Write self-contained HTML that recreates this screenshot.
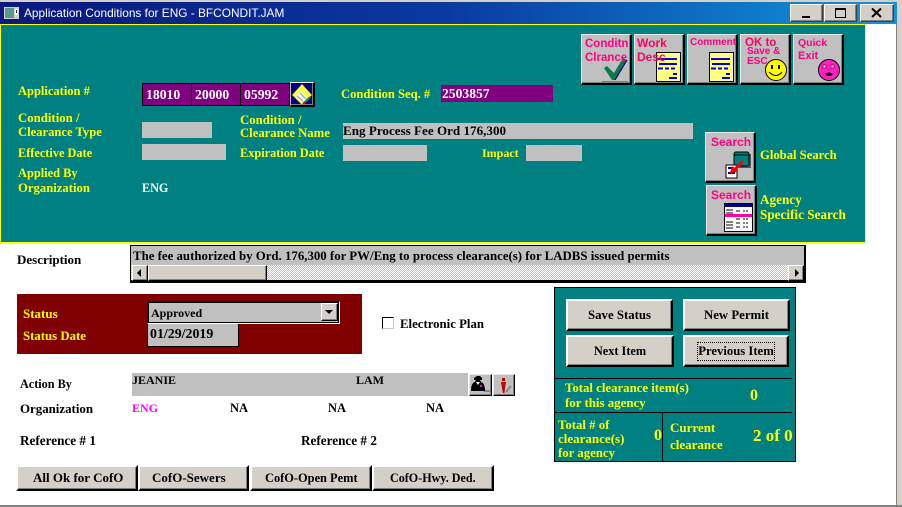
<!DOCTYPE html>
<html><head><meta charset="utf-8"><style>
html,body{margin:0;padding:0;background:#fff}
#w{position:relative;width:902px;height:507px;overflow:hidden;background:#fff;font:bold 12.8px "Liberation Serif",serif}
#w div,#w svg{position:absolute;box-sizing:border-box}
.t{white-space:nowrap;line-height:14px;color:#000}
.y{color:#ff0;font-size:12.6px}
.g{background:#c0c0c0}
.p{background:#800080;border:1px solid #000;color:#fff;font-size:13.7px;line-height:21px;padding-left:3px}
.b{background:#d4d0c8;border:2px solid;border-color:#fff #000 #000 #fff;box-shadow:inset -1px -1px 0 #808080;text-align:center;color:#000;line-height:26px;white-space:nowrap}
.l{text-align:left;line-height:22px;height:26px;top:465px}
.i{background:#c0c0c0;border:1px solid;border-width:1px 2px 2px 1px;border-color:#e8e8e8 #000 #000 #e8e8e8;box-shadow:inset -1px -1px 0 #808080}
.m{color:#ff0080;font:bold 12px "Liberation Sans",sans-serif;white-space:nowrap;line-height:14px}
.s{border-width:1px;border-color:#fff #404040 #404040 #fff}
</style></head><body><div id="w">
<div style="left:0;top:0;width:902px;height:24px;background:#d4d0c8"></div>
<div style="left:0;top:2px;width:897px;height:22px;background:linear-gradient(90deg,#0a1a80 0,#0a1a80 5%,#0a3aa0 50%,#1084d0 90%,#1a90d8 100%)"></div>
<div style="left:896px;top:24px;width:6px;height:483px;background:#d4d0c8;border-left:1px solid #808080"></div>
<div style="left:0;top:505px;width:902px;height:2px;background:#808080"></div>
<svg style="left:4px;top:7px" width="15" height="12"><rect width="15" height="12" fill="#d4d0c8"/><rect x="1" y="1" width="9" height="10" fill="#5a9a90"/><rect x="11" y="2" width="3" height="6" fill="#fff"/><rect x="12" y="3" width="1" height="3" fill="#0a246a"/></svg>
<div class="t" style="left:24px;top:6px;color:#fff;font:11.86px/14px 'Liberation Sans',sans-serif">Application Conditions for ENG - BFCONDIT.JAM</div>
<div class="b s" style="left:790px;top:4px;width:33px;height:18px"></div>
<div style="left:802px;top:16px;width:8px;height:2px;background:#000"></div>
<div class="b s" style="left:824px;top:4px;width:33px;height:18px"></div>
<div style="left:835px;top:8px;width:11px;height:10px;border:1px solid #000;border-top-width:2px"></div>
<div class="b s" style="left:860px;top:4px;width:34px;height:18px"></div>
<svg style="left:871px;top:8px" width="12" height="10"><path d="M1 0.5L10 9M10 0.5L1 9" stroke="#000" stroke-width="2"/></svg>

<div style="left:0;top:24px;width:866px;height:220px;background:#008080;border:1px solid #ff0;border-width:1px 1px 2px 1px"></div>

<div class="t y" style="left:18px;top:84px;font-size:12.5px">Application #</div>
<div class="p" style="left:142px;top:83px;width:50px;height:23px">18010</div>
<div class="p" style="left:191px;top:83px;width:50px;height:23px">20000</div>
<div class="p" style="left:240px;top:83px;width:50px;height:23px">05992</div>
<div class="i" style="left:290px;top:82px;width:25px;height:25px;background:#000080;border-color:#fff #000 #000 #c0c0c0"></div>
<svg style="left:292px;top:84px" width="21" height="22"><path d="M0 11L10 0L20 11L10 21Z" fill="#ffff40" stroke="#555" stroke-width=".5"/><path d="M3 12L9 7L16 14L11 20Z" fill="#f4f4f4"/><path d="M5 12L11 17M8 9L14 15" stroke="#999"/><path d="M11 20L13 18" stroke="#f00" stroke-width="2"/><path d="M13 18L18 13" stroke="#0a0" stroke-width="2"/></svg>
<div class="t y" style="left:341px;top:87px;font-size:12.6px">Condition Seq. #</div>
<div style="left:441px;top:85px;width:112px;height:17px;background:#800080;color:#fff;padding-left:1px;line-height:17px;font-size:13.6px">2503857</div>

<div class="t y" style="left:18px;top:111px;font-size:12.8px">Condition /</div>
<div class="t y" style="left:18px;top:125px">Clearance Type</div>
<div class="g" style="left:142px;top:122px;width:70px;height:16px"></div>
<div class="t y" style="left:240px;top:113px;font-size:12.8px">Condition /</div>
<div class="t y" style="left:240px;top:126px;font-size:12.7px">Clearance Name</div>
<div class="g t" style="left:343px;top:123px;width:350px;height:16px;line-height:15px;font-size:13.1px">Eng Process Fee Ord 176,300</div>
<div class="t y" style="left:18px;top:146px;font-size:12.3px">Effective Date</div>
<div class="g" style="left:142px;top:144px;width:84px;height:16px"></div>
<div class="t y" style="left:240px;top:146px;font-size:12.3px">Expiration Date</div>
<div class="g" style="left:343px;top:145px;width:84px;height:16px"></div>
<div class="t y" style="left:482px;top:146px;font-size:12px">Impact</div>
<div class="g" style="left:526px;top:145px;width:56px;height:16px"></div>
<div class="t y" style="left:18px;top:166px;font-size:12.4px">Applied By</div>
<div class="t y" style="left:18px;top:181px;font-size:12.7px">Organization</div>
<div class="t" style="left:142px;top:181px;color:#fff;font-size:12.2px">ENG</div>

<div class="i" style="left:581px;top:34px;width:51px;height:51px"></div>
<svg style="left:602px;top:58px" width="28" height="25"><path d="M0 23.5H26" stroke="#808080" stroke-width="1"/><path d="M2 10L5 8L12 15L21 0L25 2L13 22H10Z" fill="#0a7a4a"/><path d="M25 2L13 22" stroke="#000080" stroke-width="1.2"/></svg>
<div class="m" style="left:585px;top:37px;font-size:11.5px">Conditn</div>
<div class="m" style="left:585px;top:51px;font-size:11.5px">Clrance</div>

<div class="i" style="left:634px;top:34px;width:51px;height:51px"></div>
<svg style="left:656px;top:52px" width="26" height="30"><rect x=".5" y=".5" width="24" height="29" fill="#ffff80" stroke="#000"/><path d="M2 7H21M3 12H21M2 16.5H7M9 16.5H13M15 16.5H19M17 22H21M13 26H21" stroke="#0000e0" stroke-width="2"/></svg>
<div class="m" style="left:637px;top:36px;color:#ff0060">Work</div>
<div class="m" style="left:637px;top:50px;color:#ff0060">Desc</div>

<div class="i" style="left:687px;top:34px;width:51px;height:51px"></div>
<svg style="left:709px;top:52px" width="26" height="30"><rect x=".5" y=".5" width="24" height="29" fill="#ffff80" stroke="#000"/><path d="M2 7H21M3 12H21M2 16.5H7M9 16.5H13M15 16.5H19M17 22H21M13 26H21" stroke="#0000e0" stroke-width="2"/></svg>
<div class="m" style="left:690px;top:36px;font-size:10px">Comment</div>

<div class="i" style="left:740px;top:34px;width:51px;height:51px"></div>
<svg style="left:764px;top:58px" width="24" height="24"><circle cx="12" cy="12" r="10.5" fill="#ffff00" stroke="#000"/><rect x="7" y="7" width="2" height="4"/><rect x="14" y="7" width="2" height="4"/><path d="M5 14Q12 21 18 14" fill="none" stroke="#000"/></svg>
<div class="m" style="left:745px;top:36px;color:#ff0060;font-size:11.5px">OK to</div>
<div class="m" style="left:747px;top:45px;font-size:10px">Save &amp;</div>
<div class="m" style="left:747px;top:55px;font-size:10px">ESC</div>

<div class="i" style="left:793px;top:34px;width:51px;height:51px"></div>
<svg style="left:817px;top:58px" width="24" height="24"><circle cx="12" cy="12" r="10.5" fill="#ff20c0" stroke="#000"/><rect x="6" y="7" width="3" height="3" fill="#ffc0e0" stroke="#000" stroke-width=".5"/><rect x="14" y="7" width="3" height="3" fill="#ffc0e0" stroke="#000" stroke-width=".5"/><path d="M8 16Q12 20 16 16Q12 13 8 16Z" fill="#000"/></svg>
<div class="m" style="left:798px;top:36px;font-size:10.5px">Quick</div>
<div class="m" style="left:798px;top:49px;font-size:11px">Exit</div>

<div class="i" style="left:705px;top:132px;width:51px;height:51px"></div>
<svg style="left:725px;top:151px" width="28" height="28"><rect x="11" y="3" width="15" height="14" fill="#555"/><rect x="9" y="1" width="15" height="14" rx="2" fill="#008080" stroke="#000"/><path d="M9 4H24" stroke="#000"/><rect x="1" y="14" width="11" height="13" fill="#fff" stroke="#000"/><path d="M3 17H9M3 22H10" stroke="#0000a0" stroke-width="2"/><path d="M5 22L7 15L9 17L17 9L19 11L11 19L13 21Z" fill="#f00"/></svg>
<div class="m" style="left:711px;top:135px">Search</div>
<div class="t y" style="left:760px;top:148px;font-size:12.65px">Global Search</div>

<div class="i" style="left:706px;top:185px;width:51px;height:51px"></div>
<svg style="left:724px;top:203px" width="30" height="30"><rect x=".5" y=".5" width="28" height="28" fill="#fff" stroke="#000"/><rect x="1" y="1" width="27" height="3" fill="#000080"/><path d="M2 7H9M2 10H9M2 13H9M2 19H9M2 22H9M2 25H9" stroke="#000"/><path d="M13 7V26M15 7V26M20 7V26M23 7V26" stroke="#000" stroke-dasharray="2 2"/><rect x="1" y="11" width="27" height="3" fill="#ff00a0"/></svg>
<div class="m" style="left:711px;top:188px">Search</div>
<div class="t y" style="left:760px;top:193px;font-size:13.2px">Agency</div>
<div class="t y" style="left:760px;top:208px;font-size:13.2px">Specific Search</div>

<div class="t" style="left:17px;top:253px;font-size:13px">Description</div>
<div style="left:130px;top:245px;width:676px;height:38px;border:1px solid #000;border-width:1px 2px 3px 1px;background:#c0c0c0"></div>
<div class="t" style="left:133px;top:249px;font-size:12.85px">The fee authorized by Ord. 176,300 for PW/Eng to process clearance(s) for LADBS issued permits</div>
<div style="left:131px;top:265px;width:673px;height:15px;background:repeating-conic-gradient(#c0c0c0 0 25%,#fff 0 50%) 0 0/2px 2px"></div>
<div class="b" style="left:132px;top:265px;width:16px;height:16px;border-width:1px"></div>
<svg style="left:137px;top:269px" width="5" height="8"><path d="M4 0V8L0 4Z"/></svg>
<div class="b" style="left:148px;top:265px;width:119px;height:16px;border-width:1px"></div>
<div class="b" style="left:788px;top:265px;width:16px;height:16px;border-width:1px"></div>
<svg style="left:795px;top:269px" width="5" height="8"><path d="M0 0V8L4 4Z"/></svg>

<div style="left:17px;top:294px;width:345px;height:60px;background:#800000"></div>
<div class="t y" style="left:23px;top:307px;font-size:13px">Status</div>
<div class="t y" style="left:23px;top:329px;font-size:12.8px">Status Date</div>
<div style="left:147px;top:301px;width:193px;height:23px;background:#c0c0c0;border:1px solid;border-color:#000 #fff #fff #000"></div>
<div style="left:148px;top:302px;width:191px;height:21px;border:1px solid #000"></div>
<div class="t" style="left:151px;top:306px;font-size:12px">Approved</div>
<div class="b" style="left:321px;top:303px;width:17px;height:18px;border-width:1px"></div>
<svg style="left:325px;top:310px" width="9" height="5"><path d="M0 0H8L4 4Z"/></svg>
<div class="g t" style="left:147px;top:324px;width:92px;height:23px;border:1px solid #000;border-top:none;padding-left:2px;line-height:22px;font-size:13.9px">01/29/2019</div>

<div style="left:382px;top:317px;width:12px;height:12px;border:1px solid #000;border-right-color:#ccc;border-bottom-color:#ccc;background:#fff"></div>
<div class="t" style="left:400px;top:317px">Electronic Plan</div>

<div style="left:554px;top:287px;width:242px;height:175px;background:#008080;border:1px solid #000"></div>
<div class="b" style="left:566px;top:299px;width:107px;height:32px;line-height:28px">Save Status</div>
<div class="b" style="left:683px;top:299px;width:107px;height:32px;line-height:28px">New Permit</div>
<div class="b" style="left:566px;top:335px;width:108px;height:32px;line-height:28px;font-size:12.3px">Next Item</div>
<div class="b" style="left:683px;top:335px;width:106px;height:32px;line-height:28px;font-size:12.7px">Previous Item</div>
<div style="left:697px;top:342px;width:78px;height:19px;border:1px dotted #000"></div>
<div style="left:555px;top:378px;width:237px;height:1px;background:#000"></div>
<div style="left:555px;top:412px;width:237px;height:1px;background:#000"></div>
<div style="left:662px;top:412px;width:1px;height:49px;background:#000"></div>
<div class="t y" style="left:565px;top:381px;font-size:12.8px">Total clearance item(s)</div>
<div class="t y" style="left:565px;top:396px;font-size:12.9px">for this agency</div>
<div class="t y" style="left:750px;top:389px;font-size:16px">0</div>
<div class="t y" style="left:558px;top:418px;font-size:12.8px">Total # of</div>
<div class="t y" style="left:558px;top:432px;font-size:13px">clearance(s)</div>
<div class="t y" style="left:558px;top:446px;font-size:12.8px">for agency</div>
<div class="t y" style="left:654px;top:429px;font-size:16px">0</div>
<div class="t y" style="left:670px;top:421px;font-size:13px">Current</div>
<div class="t y" style="left:670px;top:438px;font-size:13px">clearance</div>
<div class="t y" style="left:753px;top:429px;font-size:17px">2 of 0</div>

<div class="t" style="left:20px;top:377px;font-size:12.2px">Action By</div>
<div class="g" style="left:132px;top:373px;width:336px;height:23px"></div>
<div class="t" style="left:132px;top:373px;font-size:12px">JEANIE</div>
<div class="t" style="left:356px;top:373px;font-size:12px">LAM</div>
<div class="i" style="left:469px;top:374px;width:23px;height:22px;border-width:1px"></div>
<svg style="left:470px;top:375px" width="20" height="19"><path d="M14 15H20V17H14Z" fill="#888"/><path d="M1 16Q1 8 5 7L6 5H4V3L7 1H10L12 3V5H10L11 7Q15 8 15 16Z" fill="#000"/><rect x="10" y="10" width="2" height="2" fill="#f0f"/><path d="M6 7H10L8 10Z" fill="#fff"/></svg>
<div class="i" style="left:493px;top:374px;width:22px;height:22px;border-width:1px"></div>
<svg style="left:495px;top:376px" width="18" height="18"><rect x="7" y="2" width="3" height="3" fill="#c00000"/><path d="M6 6H11L10 12L9.500 17H8L7 12Z" fill="#c00000"/><path d="M11 16L16 10" stroke="#888" stroke-width="2"/></svg>
<div class="t" style="left:20px;top:402px;font-size:12.9px">Organization</div>
<div class="t" style="left:132px;top:401px;color:#f0f;font-size:12px">ENG</div>
<div class="t" style="left:230px;top:401px;font-size:12.5px">NA</div>
<div class="t" style="left:328px;top:401px;font-size:12.5px">NA</div>
<div class="t" style="left:426px;top:401px;font-size:12.5px">NA</div>
<div class="t" style="left:20px;top:434px;font-size:13.2px">Reference # 1</div>
<div class="t" style="left:301px;top:434px;font-size:13.2px">Reference # 2</div>
<div class="b l" style="left:16px;width:122px;padding-left:15px;font-size:13px">All Ok for CofO</div>
<div class="b l" style="left:138px;width:111px;padding-left:12px;font-size:13px">CofO-Sewers</div>
<div class="b l" style="left:250px;width:122px;padding-left:13px;font-size:12.4px">CofO-Open Pemt</div>
<div class="b l" style="left:372px;width:122px;padding-left:16px;font-size:12.1px">CofO-Hwy. Ded.</div>
</div></body></html>
